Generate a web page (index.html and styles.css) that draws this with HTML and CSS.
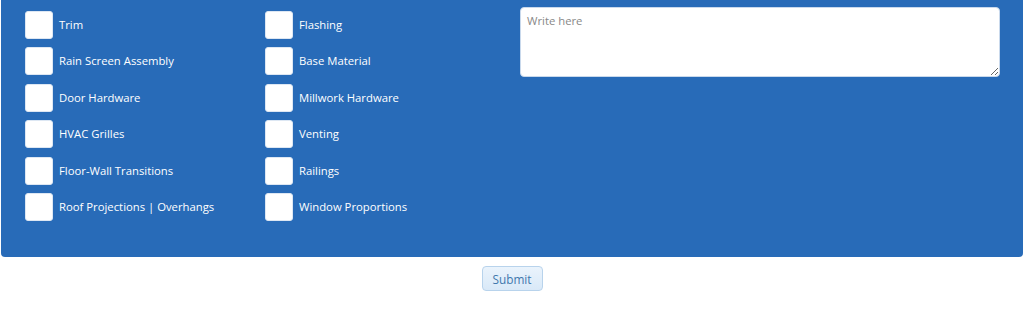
FILE: index.html
```html
<!DOCTYPE html>
<html lang="en">

<head>
    <meta charset="UTF-8">
    <meta name="viewport" content="width=device-width, initial-scale=1.0">
    <title>Details</title>
    <link rel="stylesheet" href="styles.css">
</head>

<body>
    <form class="details">
        <div class="panel">
            <ul class="checks">
                <li><label><input type="checkbox"><span>Trim</span></label></li>
                <li><label><input type="checkbox"><span>Rain Screen Assembly</span></label></li>
                <li><label><input type="checkbox"><span>Door Hardware</span></label></li>
                <li><label><input type="checkbox"><span>HVAC Grilles</span></label></li>
                <li><label><input type="checkbox"><span>Floor-Wall Transitions</span></label></li>
                <li><label><input type="checkbox"><span>Roof Projections | Overhangs</span></label></li>
            </ul>
            <ul class="checks">
                <li><label><input type="checkbox"><span>Flashing</span></label></li>
                <li><label><input type="checkbox"><span>Base Material</span></label></li>
                <li><label><input type="checkbox"><span>Millwork Hardware</span></label></li>
                <li><label><input type="checkbox"><span>Venting</span></label></li>
                <li><label><input type="checkbox"><span>Railings</span></label></li>
                <li><label><input type="checkbox"><span>Window Proportions</span></label></li>
            </ul>
            <div class="note">
                <textarea placeholder="Write here"></textarea>
            </div>
        </div>
        <div class="actions">
            <button type="button" class="submit">Submit</button>
        </div>
    </form>
</body>

</html>
```

FILE: styles.css
```css
* {
    margin: 0;
    padding: 0;
    box-sizing: border-box;
}

body {
    background-color: #fff;
    font-family: "Open Sans", "Liberation Sans", sans-serif;
    font-size: 11.3px;
    color: #333;
}

ul li {
    list-style: none;
}

.details {
    width: 1022px;
    margin-left: 1px;
}

.panel {
    display: flex;
    height: 257px;
    padding: 7px 23px 0 24px;
    background-color: #286bb8;
    border-radius: 0 0 4px 4px;
}

.checks {
    width: 240px;
    padding-top: 4px;
}

.checks li {
    height: 28px;
    margin-bottom: 8.4px;
}

.checks label {
    display: flex;
    align-items: center;
    height: 28px;
    color: #fff;
    cursor: pointer;
}

.checks input {
    appearance: none;
    -webkit-appearance: none;
    width: 28px;
    height: 28px;
    margin-right: 6px;
    background-color: #fff;
    border: 1px solid #dde7f3;
    border-radius: 3px;
    flex-shrink: 0;
}

.checks span {
    line-height: 18px;
}

.note {
    flex: 1;
    padding-left: 15px;
}

.note textarea {
    display: block;
    width: 480px;
    height: 70px;
    padding: 5px 6px;
    font-family: "Open Sans", "Liberation Sans", sans-serif;
    font-size: 11.3px;
    color: #555;
    background-color: #fff;
    border: 1px solid #c9d9ec;
    border-radius: 4px;
    outline: none;
}

.note textarea::placeholder {
    color: #888;
}

.actions {
    display: flex;
    justify-content: center;
    padding-top: 9px;
}

.submit {
    width: 61px;
    height: 25px;
    font-family: "Open Sans", "Liberation Sans", sans-serif;
    font-size: 11.8px;
    color: #3f78ad;
    background: linear-gradient(#eaf3fc, #d9e9f8);
    border: 1px solid #b8d3ec;
    border-radius: 4px;
    cursor: pointer;
}
```
